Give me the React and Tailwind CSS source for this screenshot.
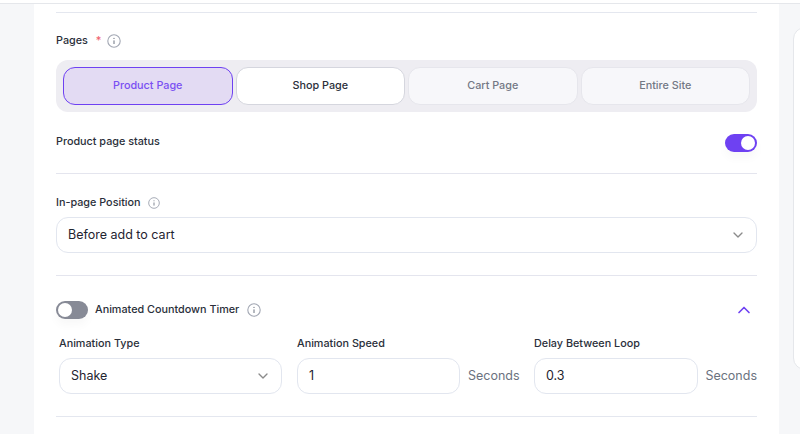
import React from 'react';
import { ChevronDown, ChevronUp } from "lucide-react";

const InfoIcon = ({ size = 14 }) => (
  <svg width={size} height={size} viewBox="0 0 14 14" fill="none" className="shrink-0">
    <circle cx="7" cy="7" r="6.2" stroke="#a2a7b3" strokeWidth="1.1" />
    <path d="M7 6.4V10" stroke="#6b7280" strokeWidth="1" />
    <circle cx="7" cy="4.4" r="0.6" fill="#6b7280" />
  </svg>
);

const Toggle = ({ on }) => (
  <div className={`flex items-center w-8 h-[18px] rounded-full px-[2px] shadow-[0_6px_10px_rgba(0,0,0,0.03)] ${on ? "justify-end bg-[#6e41f2]" : "justify-start bg-[#878a96]"}`}>
    <div className="w-[14px] h-[14px] rounded-full bg-white" />
  </div>
);

const PageTab = ({ label, state }) => {
  const styles = {
    active: "bg-[#e3dbf3] border-[#6e41f2] text-[#7a50f2]",
    normal: "bg-white border-[#d5d6de] text-[#2a2f3a]",
    muted: "bg-[#f7f7fa] border-[#e6e6ec] text-[#737885]",
  };
  return (
    <div className={`flex-1 h-[38px] flex items-center justify-center rounded-xl border text-[10.8px] font-medium ${styles[state]}`}>
      {label}
    </div>
  );
};

const Field = ({ value, select, width }) => (
  <div className={`h-9 flex items-center justify-between rounded-xl border border-[#e2e6ef] bg-white pl-[11px] pr-[10px] text-[12.5px] text-[#1f2430] ${width}`}>
    <span>{value}</span>
    {select && <ChevronDown size={16} strokeWidth={2} className="text-[#8b8b8b]" />}
  </div>
);

export default function App() {
  return (
    <div className="w-[800px] h-[434px] overflow-hidden bg-[#f6f7f9] font-['Inter',sans-serif] text-[#2a2f3a]">
      <div className="h-1 border-b border-[#e5e7eb] bg-white" />
      <div className="flex">
        <div className="w-[745px] shrink-0 ml-[34px] bg-white px-[22px] pt-2 h-[430px]">
          <div className="border-t border-[#e4e7ef]" />

          {/* Pages */}
          <div className="flex items-center h-[14px] mt-[21px] text-[10.8px] font-medium">
            <span>Pages</span>
            <span className="text-[#f0616d] ml-[8px] mr-[6px]">*</span>
            <InfoIcon />
          </div>
          <div className="flex gap-[3px] mt-[12px] p-[7px] rounded-xl bg-[#eeedf2]">
            <PageTab label="Product Page" state="active" />
            <PageTab label="Shop Page" state="normal" />
            <PageTab label="Cart Page" state="muted" />
            <PageTab label="Entire Site" state="muted" />
          </div>

          {/* Status */}
          <div className="flex items-center justify-between h-[18px] mt-[22px] text-[10.8px] font-medium">
            <span className="pb-[2px]">Product page status</span>
            <Toggle on />
          </div>
          <div className="border-t border-[#e4e5ee] mt-[21px]" />

          {/* Position */}
          <div className="flex items-center gap-[7px] h-[14px] mt-[22px] text-[10.8px] font-medium">
            <span>In-page Position</span>
            <InfoIcon size={12} />
          </div>
          <div className="mt-[7px]">
            <Field value="Before add to cart" select width="w-full" />
          </div>
          <div className="border-t border-[#e4e5ee] mt-[22px]" />

          {/* Countdown */}
          <div className="flex items-center justify-between h-[18px] mt-[25px]">
            <div className="flex items-center text-[10.8px] font-medium">
              <Toggle />
              <span className="ml-[7px] mr-2">Animated Countdown Timer</span>
              <InfoIcon />
            </div>
            <ChevronUp size={20} className="text-[#6e41f2] mr-[3px]" />
          </div>
          <div className="flex mt-[18px] pl-[3px]">
            <div className="w-[223px] mr-[15px]">
              <div className="text-[10.8px] font-medium h-[14px] flex items-center">Animation Type</div>
              <div className="mt-[7px]"><Field value="Shake" select width="w-full" /></div>
            </div>
            <div className="w-[223px] mr-[14px]">
              <div className="text-[10.8px] font-medium h-[14px] flex items-center">Animation Speed</div>
              <div className="flex items-center mt-[7px]">
                <Field value="1" width="w-[163px]" />
                <span className="ml-2 text-[12.5px] text-[#6b7280]">Seconds</span>
              </div>
            </div>
            <div className="flex-1">
              <div className="text-[10.8px] font-medium h-[14px] flex items-center">Delay Between Loop</div>
              <div className="flex items-center justify-between mt-[7px]">
                <Field value="0.3" width="w-[164px]" />
                <span className="text-[12.5px] text-[#6b7280]">Seconds</span>
              </div>
            </div>
          </div>
          <div className="border-t border-[#e4e7ef] mt-[22px]" />
        </div>

        {/* Side card */}
        <div className="ml-[14px] mt-[23px] w-10 shrink-0 h-[343px] rounded-l-xl border border-[#e5e7eb] bg-white" />
      </div>
    </div>
  );
}
